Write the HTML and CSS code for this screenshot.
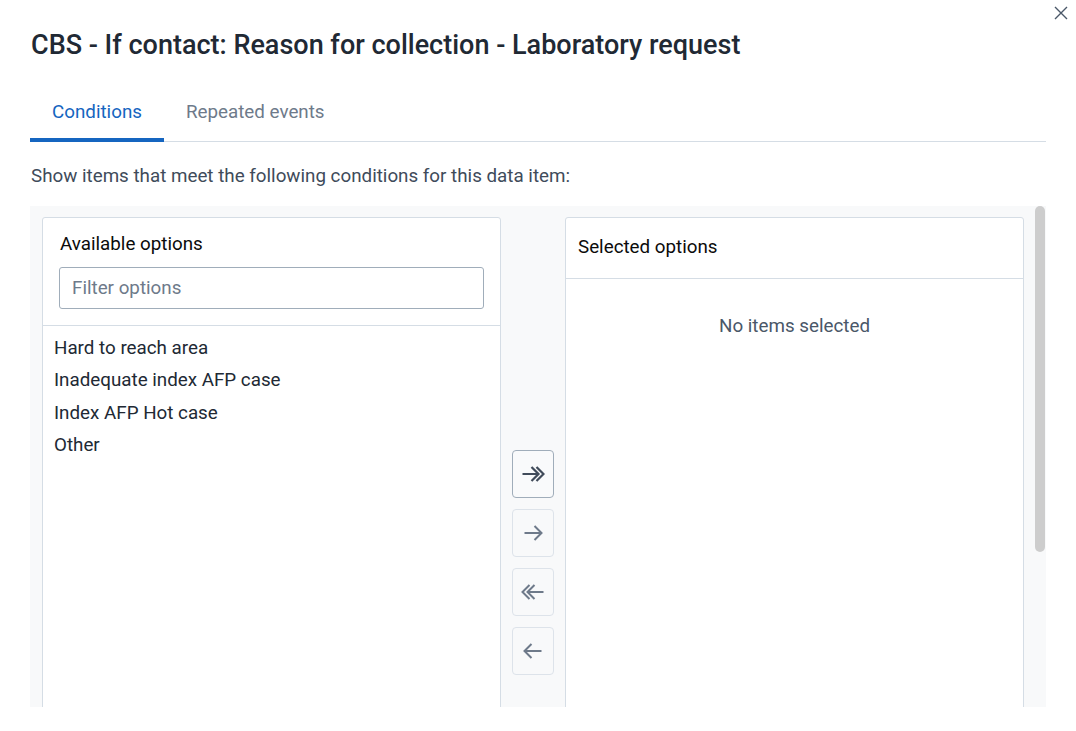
FILE: index.html
```html
<!DOCTYPE html>
<html>
<head>
<meta charset="utf-8">
<link rel="stylesheet" href="styles.css">
</head>
<body>
<div class="modal">
  <button class="close" aria-label="Close">
    <svg width="14" height="14" viewBox="0 0 14 14"><path d="M1 1L13 13M13 1L1 13" stroke="#4a5768" stroke-width="1.4" fill="none"/></svg>
  </button>
  <h1 class="title">CBS - If contact: Reason for collection - Laboratory request</h1>
  <div class="tabs">
    <div class="tab active">Conditions</div>
    <div class="tab">Repeated events</div>
  </div>
  <p class="desc">Show items that meet the following conditions for this data item:</p>
  <div class="transfer">
    <div class="transfer-inner">
      <div class="panel">
        <div class="panel-head left-head">
          <div class="panel-title">Available options</div>
          <div class="filter">Filter options</div>
        </div>
        <ul class="options">
          <li>Hard to reach area</li>
          <li>Inadequate index AFP case</li>
          <li>Index AFP Hot case</li>
          <li>Other</li>
        </ul>
      </div>
      <div class="actions">
        <button class="btn enabled"><svg width="24" height="24" viewBox="0 0 24 24"><path d="M1.5 12H17.5M10.5 5L17.5 12L10.5 19M15.5 5L22.5 12L15.5 19" fill="none" stroke="currentColor" stroke-width="2.2"/></svg></button>
        <button class="btn"><svg width="24" height="24" viewBox="0 0 24 24"><path d="M3.5 12H20.5M13.5 5L20.5 12L13.5 19" fill="none" stroke="currentColor" stroke-width="2"/></svg></button>
        <button class="btn"><svg width="24" height="24" viewBox="0 0 24 24"><path d="M22.5 12H6.5M13.5 5L6.5 12L13.5 19M8.5 5L1.5 12L8.5 19" fill="none" stroke="currentColor" stroke-width="2"/></svg></button>
        <button class="btn"><svg width="24" height="24" viewBox="0 0 24 24"><path d="M20.5 12H3.5M10.5 5L3.5 12L10.5 19" fill="none" stroke="currentColor" stroke-width="2"/></svg></button>
      </div>
      <div class="panel">
        <div class="panel-head right-head">
          <div class="panel-title">Selected options</div>
        </div>
        <div class="empty">No items selected</div>
      </div>
    </div>
    <div class="scroll-thumb"></div>
  </div>
</div>
</body>
</html>
```
FILE: styles.css
```css
* { box-sizing: border-box; }
html, body { margin: 0; padding: 0; background: #fff; }
body { font-family: Roboto, "Noto Sans", sans-serif; color: #212934; }
.modal { position: relative; width: 1076px; height: 731px; padding: 0 30px 0 30px; }
.close { position: absolute; top: 5px; right: 7px; width: 16px; height: 16px; padding: 1px; border: 0; background: transparent; display: flex; align-items: center; justify-content: center; }
.title { margin: 0; padding-top: 29px; font-size: 27px; line-height: 32px; font-weight: 500; color: #212934; padding-left: 1px; }
.tabs { display: flex; margin-top: 39px; border-bottom: 1px solid #d5dde5; }
.tab { position: relative; padding: 0 22px 17px; font-size: 18.8px; line-height: 24px; color: #6e7a8a; }
.tab.active { color: #1565c0; }
.tab.active::after { content: ""; position: absolute; left: 0; right: 0; bottom: -1px; height: 4px; background: #1565c0; }
.desc { margin: 22px 0 0 1px; font-size: 18.8px; line-height: 24px; color: #404b5a; }
.transfer { position: relative; margin-top: 18px; height: 501px; background: #f8f9fa; overflow: hidden; }
.scroll-thumb { position: absolute; top: 0; right: 1px; width: 10px; height: 346px; background: #cdcdcd; border-radius: 5px; }
.transfer-inner { display: flex; padding: 11px 22px 12px 12px; }
.panel { width: 459px; height: 690px; background: #fff; border: 1px solid #d5dde5; border-radius: 3px; display: flex; flex-direction: column; }
.panel-head { border-bottom: 1px solid #d5dde5; }
.left-head { padding: 14px 16px 16px 16px; }
.right-head { padding: 17px 11px 19px 11px; }
.panel-title { font-size: 18.8px; line-height: 24px; color: #0b0b0b; padding-left: 1px; }
.left-head .panel-title { margin-bottom: 11px; }
.filter { height: 42px; border: 1px solid #a0adba; border-radius: 3px; padding: 0 12px; font-size: 18.8px; line-height: 40px; color: #6e7a8a; }
.options { list-style: none; margin: 0; padding: 6px 0 0 11px; }
.options li { font-size: 18.8px; line-height: 32.3px; color: #212934; }
.actions { width: 64px; display: flex; flex-direction: column; align-items: center; justify-content: center; gap: 11px; }
.btn { width: 42px; height: 48px; border: 1px solid #dde3ea; border-radius: 4px; background: #f8f9fa; color: #6e7a8a; display: flex; align-items: center; justify-content: center; padding: 0; }
.btn.enabled { border-color: #a0adba; color: #404b5a; background: #f9fafb; }
.empty { text-align: center; padding-top: 35px; font-size: 18.8px; line-height: 24px; color: #4a5768; }
```
